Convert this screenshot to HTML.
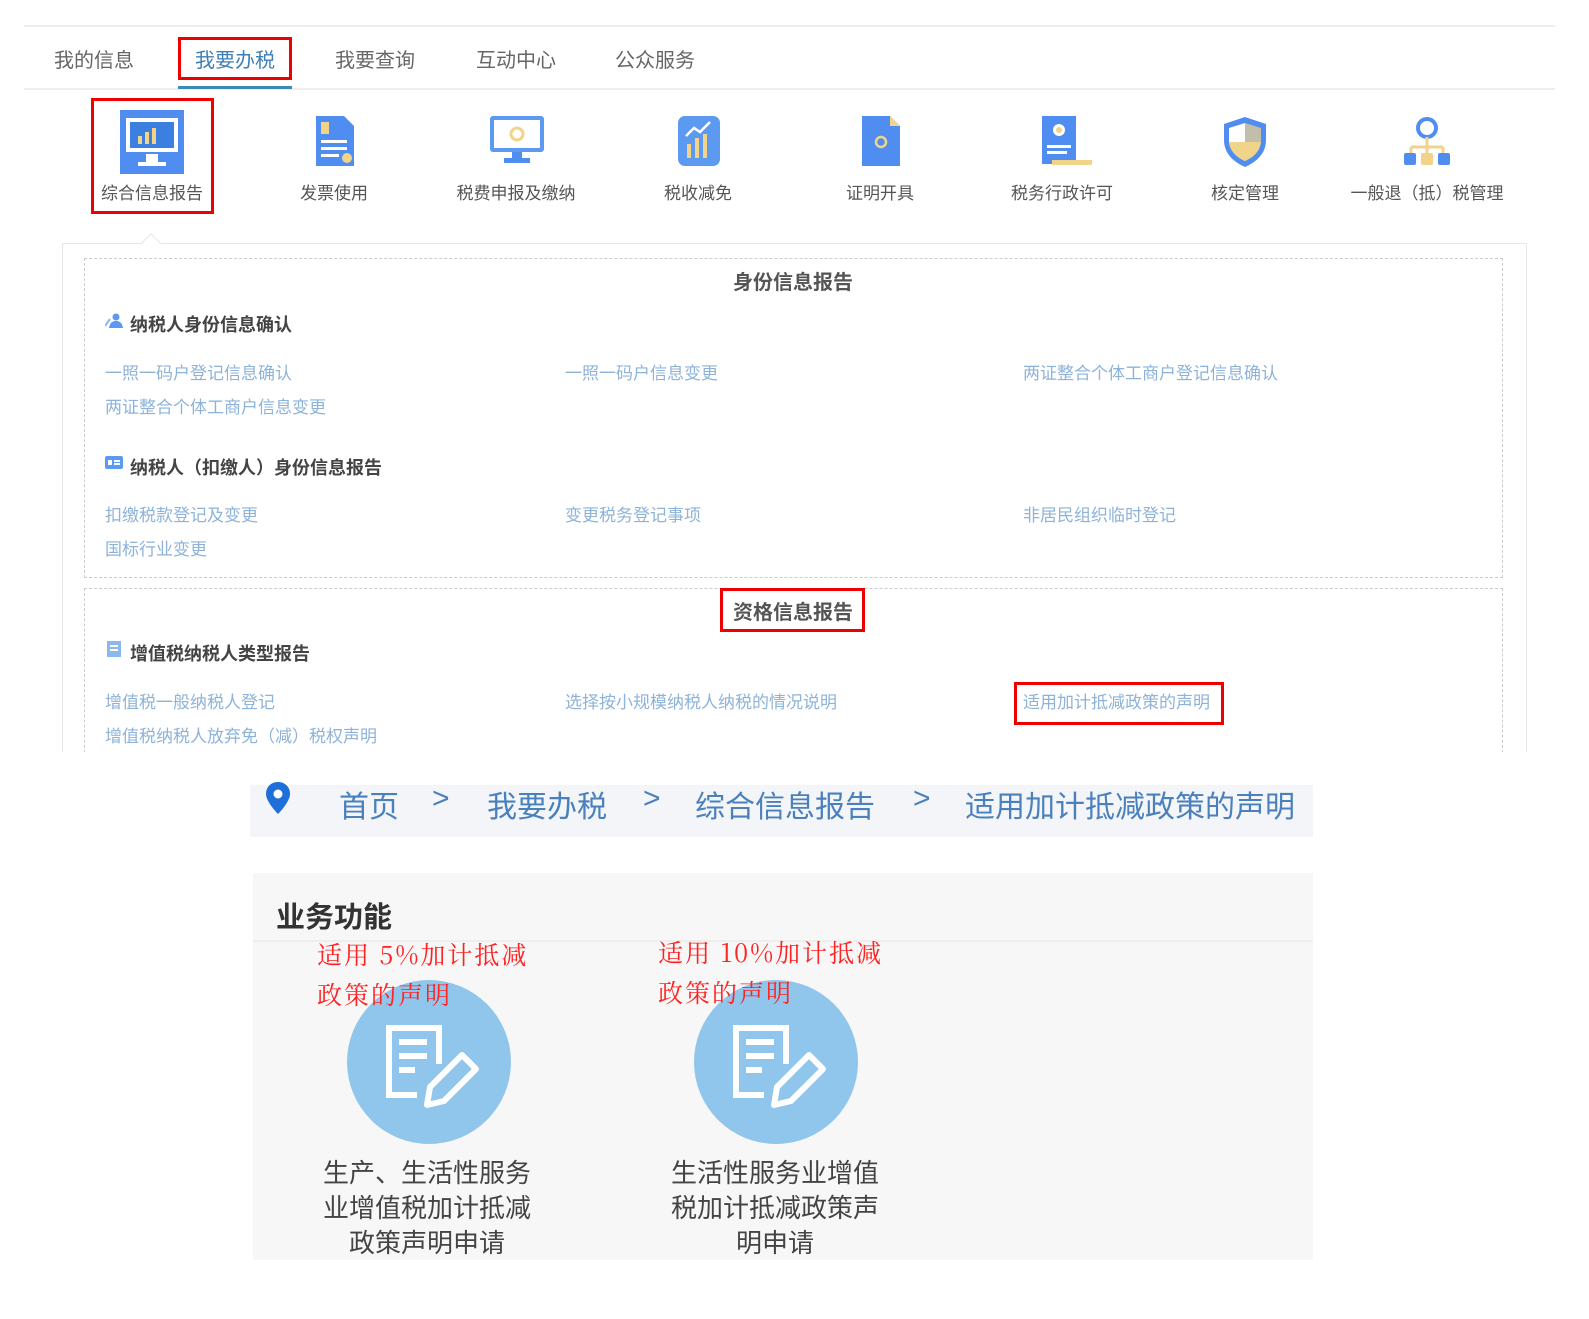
<!DOCTYPE html>
<html><head><meta charset="utf-8"><style>
*{margin:0;padding:0;box-sizing:border-box}
body{width:1589px;height:1319px;background:#fff;position:relative;overflow:hidden;font-family:"Liberation Sans","Noto Sans CJK SC",sans-serif}
.a{position:absolute;white-space:nowrap}
.tab{font-size:20px;color:#666;top:44px}
.lbl{font-size:17px;color:#555;top:179px;transform:translateX(-50%)}
.ic{position:absolute;top:110px}
.lk{font-size:17px;color:#8db3d9}
.sub{font-size:18px;color:#444;font-weight:bold}
.rb{position:absolute;border:3px solid #e00}
.bc{font-size:30px;color:#4a80bb;top:782px}
.red{font-family:"Noto Serif CJK SC",serif;color:#f22;font-size:25px;letter-spacing:2px}
.cl{font-size:26px;color:#444;text-align:center;line-height:35px;width:260px}
</style></head><body>
<div class="a" style="left:24px;top:25px;width:1531px;height:2px;background:#eee"></div>
<div class="a tab" style="left:54px">我的信息</div>
<div class="a tab" style="left:195px;color:#3d7fb8">我要办税</div>
<div class="a tab" style="left:335px">我要查询</div>
<div class="a tab" style="left:476px">互动中心</div>
<div class="a tab" style="left:615px">公众服务</div>
<div class="rb" style="left:178px;top:37px;width:114px;height:43px"></div>
<div class="a" style="left:24px;top:88px;width:1531px;height:2px;background:#eee"></div>
<div class="a" style="left:178px;top:86px;width:114px;height:3px;background:#3d8ab8"></div>

<svg class="ic" style="left:120px" width="64" height="64"><rect x="0" y="0" width="64" height="64" fill="#4f8ef0"/><rect x="6" y="8" width="52" height="34" fill="#fff"/><rect x="10" y="12" width="44" height="26" fill="#3b7fe0"/><rect x="18" y="26" width="4" height="8" fill="#f2d38a"/><rect x="25" y="22" width="4" height="12" fill="#f2d38a"/><rect x="32" y="18" width="4" height="16" fill="#f2d38a"/><rect x="26" y="44" width="12" height="8" fill="#fff"/><rect x="18" y="52" width="28" height="4" fill="#fff"/></svg>
<svg class="ic" style="left:316px;top:116px" width="38" height="50"><path d="M0 0h28l10 10v40H0z" fill="#4f8ef0"/><rect x="5" y="6" width="8" height="12" fill="#f2d38a"/><rect x="5" y="24" width="26" height="3" fill="#fff"/><rect x="5" y="31" width="26" height="3" fill="#fff"/><rect x="5" y="38" width="18" height="3" fill="#fff"/><circle cx="31" cy="42" r="5" fill="#f2d38a"/></svg>
<svg class="ic" style="left:490px;top:116px" width="54" height="50"><rect x="0" y="0" width="54" height="36" rx="3" fill="#5b9af0"/><rect x="4" y="4" width="46" height="28" fill="#fff"/><circle cx="27" cy="18" r="6" fill="none" stroke="#f2d38a" stroke-width="3"/><rect x="22" y="36" width="10" height="6" fill="#4f8ef0"/><rect x="14" y="42" width="26" height="5" fill="#4f8ef0"/></svg>
<svg class="ic" style="left:678px;top:116px" width="42" height="50"><rect width="42" height="50" rx="7" fill="#5b9af0"/><rect x="9" y="28" width="4" height="14" fill="#f2d38a"/><rect x="17" y="22" width="4" height="20" fill="#f2d38a"/><rect x="25" y="18" width="4" height="24" fill="#f2d38a"/><path d="M8 20l8-8 6 4 10-10" stroke="#fff" stroke-width="2.5" fill="none"/></svg>
<svg class="ic" style="left:862px;top:116px" width="38" height="50"><path d="M0 0h28l10 10v40H0z" fill="#4f8ef0"/><path d="M28 0v10h10z" fill="#f2d38a"/><circle cx="19" cy="26" r="5" fill="none" stroke="#f2d38a" stroke-width="2.5"/></svg>
<svg class="ic" style="left:1042px;top:116px" width="52" height="50"><rect x="0" y="0" width="34" height="48" fill="#4f8ef0"/><rect x="10" y="44" width="40" height="5" fill="#f2d38a"/><circle cx="17" cy="14" r="6" fill="#fff"/><circle cx="17" cy="14" r="3" fill="#f2d38a"/><rect x="5" y="29" width="24" height="3" fill="#fff"/><rect x="5" y="35" width="20" height="3" fill="#fff"/></svg>
<svg class="ic" style="left:1222px;top:116px" width="46" height="52"><path d="M23 1L2 8v16c0 14 10 22 21 27 11-5 21-13 21-27V8z" fill="#4f8ef0"/><path d="M23 7L7 12v12c0 10 7 17 16 21z" fill="#fff"/><path d="M23 26h16c-1 9-7 15-16 19z" fill="#f2d38a"/><path d="M23 7l16 5v14H23z" fill="#f2d38a" opacity=".7"/><path d="M7 26h16v19c-9-4-15-10-16-19z" fill="#f2d38a"/></svg>
<svg class="ic" style="left:1403px;top:116px" width="48" height="52"><circle cx="24" cy="12" r="9" fill="none" stroke="#4f8ef0" stroke-width="4"/><path d="M24 21v10M8 31h32M8 31v6M24 31v6M40 31v6" stroke="#f2d38a" stroke-width="3" fill="none"/><rect x="1" y="37" width="12" height="12" rx="2" fill="#4f8ef0"/><rect x="18" y="37" width="12" height="12" rx="2" fill="#f2d38a"/><rect x="35" y="37" width="12" height="12" rx="2" fill="#4f8ef0"/></svg>

<div class="a lbl" style="left:152px">综合信息报告</div>
<div class="a lbl" style="left:334px">发票使用</div>
<div class="a lbl" style="left:516px">税费申报及缴纳</div>
<div class="a lbl" style="left:698px">税收减免</div>
<div class="a lbl" style="left:880px">证明开具</div>
<div class="a lbl" style="left:1062px">税务行政许可</div>
<div class="a lbl" style="left:1245px">核定管理</div>
<div class="a lbl" style="left:1427px">一般退（抵）税管理</div>
<div class="rb" style="left:91px;top:98px;width:123px;height:116px"></div>

<div class="a" style="left:62px;top:243px;width:1465px;height:520px;border:1px solid #e6e6e6;border-bottom:none"></div>
<div class="a" style="left:144px;top:236px;width:14px;height:14px;background:#fff;border-left:1px solid #e6e6e6;border-top:1px solid #e6e6e6;transform:rotate(45deg)"></div>
<div class="a" style="left:84px;top:258px;width:1419px;height:320px;border:1px dashed #ccc"></div>
<div class="a" style="left:84px;top:588px;width:1419px;height:180px;border:1px dashed #ccc;border-bottom:none"></div>

<div class="a" style="left:733px;top:266px;font-size:20px;font-weight:bold;color:#555">身份信息报告</div>
<svg class="a" style="left:105px;top:313px" width="18" height="16"><circle cx="11" cy="4" r="3.5" fill="#5b9af0"/><path d="M4 15c1-6 4-7 7-7s6 1 7 7z" fill="#5b9af0"/><path d="M0 13l5-7" stroke="#8bb7ef" stroke-width="2"/></svg>
<div class="a sub" style="left:130px;top:311px">纳税人身份信息确认</div>
<div class="a lk" style="left:105px;top:359px">一照一码户登记信息确认</div>
<div class="a lk" style="left:565px;top:359px">一照一码户信息变更</div>
<div class="a lk" style="left:1023px;top:359px">两证整合个体工商户登记信息确认</div>
<div class="a lk" style="left:105px;top:393px">两证整合个体工商户信息变更</div>
<svg class="a" style="left:105px;top:456px" width="18" height="14"><rect width="18" height="13" rx="2" fill="#5b9af0"/><rect x="3" y="4" width="4" height="5" fill="#fff"/><rect x="9" y="4" width="6" height="2" fill="#fff"/><rect x="9" y="7" width="6" height="2" fill="#fff"/></svg>
<div class="a sub" style="left:130px;top:454px">纳税人（扣缴人）身份信息报告</div>
<div class="a lk" style="left:105px;top:501px">扣缴税款登记及变更</div>
<div class="a lk" style="left:565px;top:501px">变更税务登记事项</div>
<div class="a lk" style="left:1023px;top:501px">非居民组织临时登记</div>
<div class="a lk" style="left:105px;top:535px">国标行业变更</div>

<div class="a" style="left:733px;top:596px;font-size:20px;font-weight:bold;color:#555">资格信息报告</div>
<div class="rb" style="left:720px;top:588px;width:145px;height:44px"></div>
<svg class="a" style="left:107px;top:641px" width="14" height="16"><rect width="14" height="16" fill="#8bb7ef"/><rect x="3" y="4" width="8" height="2" fill="#fff"/><rect x="3" y="8" width="8" height="2" fill="#fff"/></svg>
<div class="a sub" style="left:130px;top:640px">增值税纳税人类型报告</div>
<div class="a lk" style="left:105px;top:688px">增值税一般纳税人登记</div>
<div class="a lk" style="left:565px;top:688px">选择按小规模纳税人纳税的情况说明</div>
<div class="a lk" style="left:1023px;top:688px">适用加计抵减政策的声明</div>
<div class="rb" style="left:1014px;top:682px;width:210px;height:43px"></div>
<div class="a lk" style="left:105px;top:722px">增值税纳税人放弃免（减）税权声明</div>
<div class="a" style="left:0;top:752px;width:1589px;height:20px;background:#fff"></div>

<div class="a" style="left:250px;top:785px;width:1063px;height:52px;background:#f3f5f8"></div>
<svg class="a" style="left:264px;top:781px" width="28" height="34"><path d="M14 1C7 1 2 6 2 13c0 8 12 20 12 20s12-12 12-20C26 6 21 1 14 1z" fill="#1e6fd9"/><circle cx="14" cy="13" r="4.5" fill="#fff"/></svg>
<div class="a bc" style="left:339px">首页</div>
<div class="a bc" style="left:432px">&gt;</div>
<div class="a bc" style="left:487px">我要办税</div>
<div class="a bc" style="left:643px">&gt;</div>
<div class="a bc" style="left:695px">综合信息报告</div>
<div class="a bc" style="left:913px">&gt;</div>
<div class="a bc" style="left:965px">适用加计抵减政策的声明</div>

<div class="a" style="left:253px;top:873px;width:1060px;height:387px;background:#f7f7f7"></div>
<div class="a" style="left:253px;top:940px;width:1060px;height:2px;background:#eee"></div>
<div class="a" style="left:276px;top:894px;font-size:29px;font-weight:bold;color:#333">业务功能</div>

<svg class="a" style="left:347px;top:980px" width="164" height="164"><circle cx="82" cy="82" r="82" fill="#90c6ec"/><path d="M70 115H42V48h50v36M52 62h28M52 76h28M52 90h16" stroke="#fff" stroke-width="6" fill="none"/><path d="M80 125l3-18 32-32 14 14-32 32z" stroke="#fff" stroke-width="6" fill="none" stroke-linejoin="round"/></svg>
<svg class="a" style="left:694px;top:980px" width="164" height="164"><circle cx="82" cy="82" r="82" fill="#90c6ec"/><path d="M70 115H42V48h50v36M52 62h28M52 76h28M52 90h16" stroke="#fff" stroke-width="6" fill="none"/><path d="M80 125l3-18 32-32 14 14-32 32z" stroke="#fff" stroke-width="6" fill="none" stroke-linejoin="round"/></svg>

<div class="a red" style="left:317px;top:936px">适用 5%加计抵减</div>
<div class="a red" style="left:317px;top:976px">政策的声明</div>
<div class="a red" style="left:658px;top:934px">适用 10%加计抵减</div>
<div class="a red" style="left:658px;top:974px">政策的声明</div>

<div class="a cl" style="left:297px;top:1156px">生产、生活性服务<br>业增值税加计抵减<br>政策声明申请</div>
<div class="a cl" style="left:645px;top:1156px">生活性服务业增值<br>税加计抵减政策声<br>明申请</div>
</body></html>
